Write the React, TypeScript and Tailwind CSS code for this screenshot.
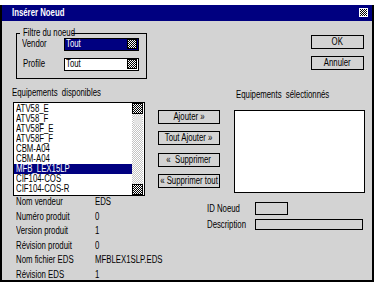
import React from "react";

const vendors = [
	"ATV58_E",
	"ATV58_F",
	"ATV58F_E",
	"ATV58F_F",
	"CBM-A04",
	"CBM-A04",
	"MFB_LEX15LP",
	"CIF104-COS",
	"CIF104-COS-R",
];

const infos: Array<[string, string]> = [
	["Nom vendeur", "EDS"],
	["Numéro produit", "0"],
	["Version produit", "1"],
	["Révision produit", "0"],
	["Nom fichier EDS", "MFBLEX1SLP.EDS"],
	["Révision EDS", "1"],
];

// the old bitmap font is narrow: squeeze Liberation Sans horizontally
function T({ children, center = false }: { children: React.ReactNode; center?: boolean }) {
	return (
		<span
			className={`inline-block shrink-0 whitespace-pre scale-x-[0.78] ${center ? "origin-center" : "origin-left"}`}
		>
			{children}
		</span>
	);
}

// little dithered square, like the arrows of the original
function Dither({ size, bg = "#000", fg = "#fff" }: { size: number; bg?: string; fg?: string }) {
	const cells = [];
	for (let y = 1; y < size - 1; y++) {
		for (let x = 1; x < size - 1; x++) {
			if ((x + y) % 2 === 0) cells.push(<rect key={`${x}-${y}`} x={x} y={y} width={1} height={1} fill={fg} />);
		}
	}
	return (
		<svg width={size} height={size} shapeRendering="crispEdges" className="block shrink-0">
			<rect width={size} height={size} fill={bg} />
			{cells}
		</svg>
	);
}

function Btn({ children, className = "" }: { children: React.ReactNode; className?: string }) {
	return (
		<div className={`flex h-[14px] items-center justify-center border border-black ${className}`}>
			<T center>{children}</T>
		</div>
	);
}

export default function App() {
	return (
		<div className="h-[288px] w-[380px] bg-white pt-[5px] font-['Liberation_Sans',Arial,sans-serif] text-[10px] leading-[10px] text-black">
			<div className="flex h-[277px] w-[374px] flex-col border-x-2 border-b-2 border-black bg-[#d3d3d3]">
				{/* title */}
				<div className="flex h-[16px] items-center justify-between bg-[#000080] pl-[10px] pr-[4px]">
					<span className="font-bold text-white">
						<T>Insérer Noeud</T>
					</span>
					<Dither size={9} bg="#fff" fg="#000" />
				</div>

				{/* filtre + ok/annuler */}
				<div className="flex h-[69px]">
					<div className="relative ml-[14px] mt-[12px] h-[46px] w-[131px] border border-black pl-[5px] pt-[4px]">
						<span className="absolute -top-[6px] left-[3px] w-[52px] bg-[#d3d3d3] pl-[3px]">
							<T>Filtre du noeud</T>
						</span>
						<div className="flex h-[13px] items-center">
							<span className="w-[42px]">
								<T>Vendor</T>
							</span>
							<div className="flex h-[13px] w-[75px] items-center justify-between border border-black bg-[#000080] pl-[1px] pr-[1px] text-white">
								<T>Tout</T>
								<Dither size={10} />
							</div>
						</div>
						<div className="mt-[7px] flex h-[13px] items-center">
							<span className="w-[42px] pl-[1px]">
								<T>Profile</T>
							</span>
							<div className="flex h-[13px] w-[75px] items-center justify-between border border-black bg-white pl-[1px] pr-[1px]">
								<T>Tout</T>
								<Dither size={10} />
							</div>
						</div>
					</div>
					<div className="ml-[164px] mt-[14px] flex w-[53px] flex-col gap-[7px]">
						<Btn>OK</Btn>
						<Btn>Annuler</Btn>
					</div>
				</div>

				{/* listes */}
				<div className="flex h-[108px]">
					<div className="ml-[10px] flex flex-col">
						<span className="h-[10px]">
							<T>Equipements  disponibles</T>
						</span>
						<div className="ml-[1px] mt-[4px] flex h-[94px] w-[132px] border border-black bg-white">
							<div className="flex w-[118px] flex-col pt-[1px]">
								{vendors.map((v, i) => (
									<div
										key={i}
										className={`h-[10px] pl-[2px] leading-[9px] ${i === 6 ? "bg-[#000080] text-white" : ""}`}
									>
										<T>{v}</T>
									</div>
								))}
							</div>
							<div className="flex w-[11px] flex-col bg-[repeating-conic-gradient(#ffffff_0_25%,#c4c4c4_0_50%)] bg-[length:2px_2px]">
								<Dither size={11} />
								<div className="ml-[2px] mt-[2px] h-[9px] w-[8px] bg-[#e4e4e4]" />
								<div className="flex-1" />
								<Dither size={11} />
							</div>
						</div>
					</div>
					<div className="ml-[13px] mt-[22px] flex w-[62px] flex-col">
						<Btn>Ajouter »</Btn>
						<Btn className="mt-[7px]">Tout Ajouter »</Btn>
						<Btn className="mt-[8px]">«  Supprimer</Btn>
						<Btn className="mt-[7px]">« Supprimer tout</Btn>
					</div>
					<div className="ml-[14px] mt-[2px] flex flex-col">
						<span className="ml-[2px] h-[10px]">
							<T>Equipements  sélectionnés</T>
						</span>
						<div className="mt-[10px] h-[83px] w-[131px] border border-black bg-white" />
					</div>
				</div>

				{/* infos */}
				<div className="mt-[1px] flex">
					<div className="ml-[14px] flex w-[191px] flex-col gap-[4.6px]">
						{infos.map(([k, v]) => (
							<div key={k} className="flex h-[10px]">
								<span className="w-[79px]">
									<T>{k}</T>
								</span>
								<T>{v}</T>
							</div>
						))}
					</div>
					<div className="mt-[5px] flex flex-col gap-[4px]">
						<div className="flex h-[13px] items-center">
							<span className="w-[48px]">
								<T>ID Noeud</T>
							</span>
							<div className="h-[13px] w-[33px] border border-black" />
						</div>
						<div className="flex h-[11px] items-center">
							<span className="w-[48px]">
								<T>Description</T>
							</span>
							<div className="h-[11px] w-[108px] border border-black" />
						</div>
					</div>
				</div>
			</div>
		</div>
	);
}
